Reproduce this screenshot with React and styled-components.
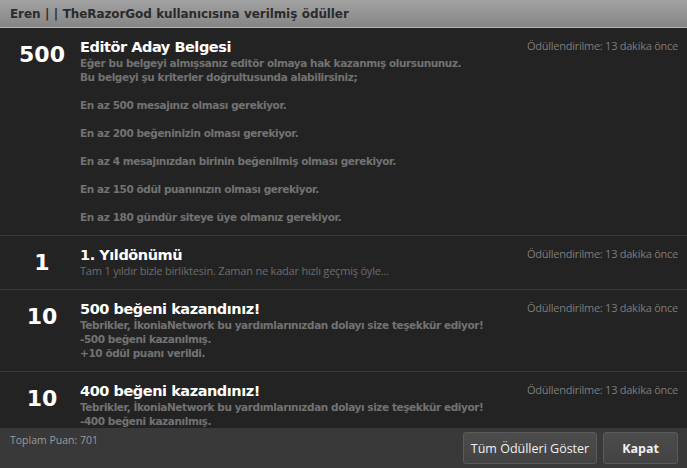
import React from "react";
import styled, { createGlobalStyle } from "styled-components";

const Global = createGlobalStyle`
  html, body { margin: 0; padding: 0; background: #232323; }
  body { font-family: "DejaVu Sans", Verdana, sans-serif; }
  * { box-sizing: border-box; }
`;

const Dialog = styled.div`
  width: 687px;
  height: 468px;
  display: flex;
  flex-direction: column;
  background: #232323;
  overflow: hidden;
`;

const Header = styled.div`
  height: 28px;
  flex: none;
  display: flex;
  align-items: center;
  padding: 0 10px;
  background: linear-gradient(#a2a2a2, #858585);
  border-bottom: 1px solid #b4b4b4;
  font-family: "DejaVu Sans", Verdana, sans-serif;
  font-weight: bold;
  font-size: 12px;
  color: #2b2b2b;
  letter-spacing: -0.1px;
  word-spacing: 0.5px;
`;

const Body = styled.div`
  flex: 1;
  overflow: hidden;
  background: #232323;
`;

const Row = styled.div`
  display: flex;
  padding: 10px 9px 11px 0;
  border-bottom: 1px solid #3b3b3b;
  &:last-child { border-bottom: none; }
`;

const Points = styled.div`
  width: 80px;
  flex: none;
  text-align: center;
  font-family: "DejaVu Sans", Verdana, sans-serif;
  font-weight: bold;
  font-size: 22px;
  color: #ffffff;
  line-height: 24px;
  padding-top: 5px;
  padding-left: 4px;
`;

const Content = styled.div`
  flex: 1;
  min-width: 0;
`;

const TitleLine = styled.div`
  display: flex;
  justify-content: space-between;
  align-items: flex-start;
`;

const Title = styled.div`
  font-family: "DejaVu Sans", Verdana, sans-serif;
  font-weight: bold;
  font-size: 14.5px;
  line-height: 18px;
  color: #ffffff;
  letter-spacing: -0.45px;
`;

const Time = styled.div`
  font-family: "Open Sans", "Noto Sans", sans-serif;
  font-size: 11px;
  line-height: 16px;
  color: #7c7c7c;
  letter-spacing: -0.25px;
`;

const Desc = styled.div`
  font-family: ${p => p.$plain ? `"Open Sans", "Noto Sans", sans-serif` : `"DejaVu Sans", Verdana, sans-serif`};
  font-weight: ${p => p.$plain ? "normal" : "bold"};
  font-size: ${p => p.$plain ? "11px" : "10.5px"};
  line-height: 14px;
  color: ${p => p.$plain ? "#6c6c6c" : "#727272"};
  letter-spacing: ${p => p.$plain ? "-0.2px" : "-0.42px"};
  white-space: pre-line;
`;

const Footer = styled.div`
  height: 40px;
  flex: none;
  display: flex;
  justify-content: space-between;
  align-items: flex-start;
  padding: 4px 9px 0 10px;
  background: #393939;
`;

const Total = styled.div`
  font-family: "Open Sans", "Noto Sans", sans-serif;
  font-size: 10.5px;
  line-height: 16px;
  color: #9a9a9a;
`;

const Buttons = styled.div`
  display: flex;
  gap: 6px;
`;

const Button = styled.button`
  height: 32px;
  width: ${p => p.$w}px;
  border: 1px solid #5a5a5a;
  border-radius: 3px;
  background: linear-gradient(#4c4c4c, #434343);
  color: #f0f0f0;
  font-family: "Open Sans", "Noto Sans", sans-serif;
  font-size: 12.5px;
  font-weight: ${p => p.$bold ? "bold" : "normal"};
  padding: 0;
  cursor: pointer;
`;

const awards = [
  {
    points: "500",
    title: "Editör Aday Belgesi",
    desc: "Eğer bu belgeyi almışsanız editör olmaya hak kazanmış olursununuz.\nBu belgeyi şu kriterler doğrultusunda alabilirsiniz;\n\nEn az 500 mesajınız olması gerekiyor.\n\nEn az 200 beğeninizin olması gerekiyor.\n\nEn az 4 mesajınızdan birinin beğenilmiş olması gerekiyor.\n\nEn az 150 ödül puanınızın olması gerekiyor.\n\nEn az 180 gündür siteye üye olmanız gerekiyor.",
  },
  {
    points: "1",
    title: "1. Yıldönümü",
    plain: true,
    desc: "Tam 1 yıldır bizle birliktesin. Zaman ne kadar hızlı geçmiş öyle...",
  },
  {
    points: "10",
    title: "500 beğeni kazandınız!",
    desc: "Tebrikler, İkoniaNetwork bu yardımlarınızdan dolayı size teşekkür ediyor!\n-500 beğeni kazanılmış.\n+10 ödül puanı verildi.",
  },
  {
    points: "10",
    title: "400 beğeni kazandınız!",
    desc: "Tebrikler, İkoniaNetwork bu yardımlarınızdan dolayı size teşekkür ediyor!\n-400 beğeni kazanılmış.\n+10 ödül puanı verildi.",
  },
];

export default function App() {
  return (
    <>
      <Global />
      <Dialog>
        <Header>Eren | | TheRazorGod kullanıcısına verilmiş ödüller</Header>
        <Body>
          {awards.map((a, i) => (
            <Row key={i}>
              <Points>{a.points}</Points>
              <Content>
                <TitleLine>
                  <Title>{a.title}</Title>
                  <Time>Ödüllendirilme: 13 dakika önce</Time>
                </TitleLine>
                <Desc $plain={a.plain}>{a.desc}</Desc>
              </Content>
            </Row>
          ))}
        </Body>
        <Footer>
          <Total>Toplam Puan: 701</Total>
          <Buttons>
            <Button $w={134}>Tüm Ödülleri Göster</Button>
            <Button $w={75} $bold>Kapat</Button>
          </Buttons>
        </Footer>
      </Dialog>
    </>
  );
}
